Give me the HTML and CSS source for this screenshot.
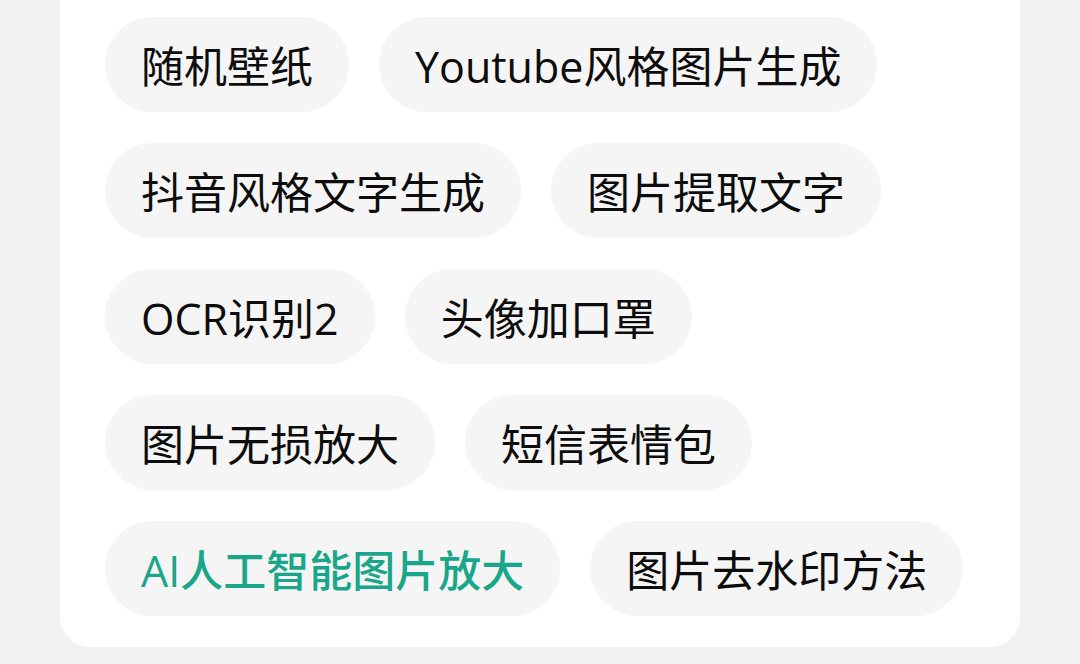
FILE: index.html
```html
<!DOCTYPE html>
<html lang="zh-CN">
<head>
<meta charset="utf-8">
<title>标签</title>
<link rel="stylesheet" href="styles.css">
</head>
<body>
<div class="card">
  <div class="tags">
    <span class="tag">随机壁纸</span>
    <span class="tag">Youtube风格图片生成</span>
    <span class="tag">抖音风格文字生成</span>
    <span class="tag">图片提取文字</span>
    <span class="tag">OCR识别2</span>
    <span class="tag">头像加口罩</span>
    <span class="tag">图片无损放大</span>
    <span class="tag">短信表情包</span>
    <span class="tag tag-active">AI人工智能图片放大</span>
    <span class="tag">图片去水印方法</span>
  </div>
</div>
</body>
</html>
```

FILE: styles.css
```css
html, body {
  margin: 0;
  padding: 0;
  background: #f2f2f2;
  width: 1080px;
  height: 664px;
  overflow: hidden;
}

.card {
  margin-left: 60px;
  width: 960px;
  box-sizing: border-box;
  background: #ffffff;
  border-radius: 0 0 30px 30px;
  padding: 17px 45px 31px 45px;
}

.tags {
  display: flex;
  flex-wrap: wrap;
  gap: 31px 30px;
  max-width: 870px;
}

.tag {
  display: inline-flex;
  align-items: center;
  height: 95px;
  padding: 0 36px;
  box-sizing: border-box;
  border-radius: 48px;
  background: #f5f5f5;
  color: #0d0d0d;
  font-family: "Open Sans", "Noto Sans CJK SC", sans-serif;
  font-size: 43px;
  white-space: nowrap;
}

.tag-active {
  color: #1aa68a;
  font-weight: 500;
}
```
